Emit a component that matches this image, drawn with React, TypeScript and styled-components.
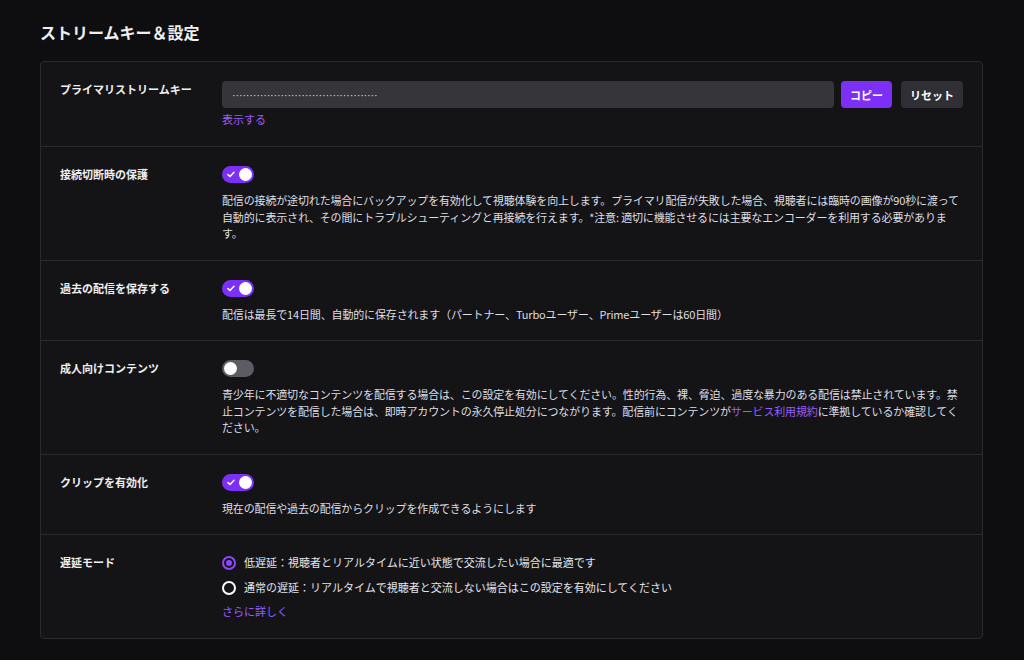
import React from "react";
import styled, { createGlobalStyle } from "styled-components";

const Global = createGlobalStyle`
  html, body { margin: 0; padding: 0; background: #0e0e10; }
  body {
    font-family: "Noto Sans CJK JP", "Noto Sans", "Liberation Sans", sans-serif;
    color: #efeff1;
  }
  * { box-sizing: border-box; }
`;

const Page = styled.div`
  width: 1024px;
  height: 660px;
  padding: 20px 41px 0 40px;
  background: #0e0e10;
  overflow: hidden;
`;

const Title = styled.h1`
  margin: 0 0 17px;
  font-size: 16px;
  line-height: 24px;
  font-weight: 700;
  color: #efeff1;
`;

const Panel = styled.section`
  background: #141417;
  border: 1px solid #2a2a2e;
  border-radius: 4px;
`;

const Row = styled.div<{ $last?: boolean }>`
  display: grid;
  grid-template-columns: 162px 1fr;
  padding: 19px 19px 18px 19px;
  border-bottom: ${(p) => (p.$last ? "none" : "1px solid #2a2a2e")};
`;

const Label = styled.div`
  font-size: 11px;
  line-height: 17px;
  font-weight: 700;
  color: #efeff1;
`;

const Control = styled.div`
  display: flex;
  flex-direction: column;
  align-items: flex-start;
  min-width: 0;
`;

const KeyLine = styled.div`
  display: flex;
  align-items: center;
  width: 100%;
`;

const KeyInput = styled.div`
  flex: 1;
  height: 27px;
  background: #35353a;
  border-radius: 4px;
  display: flex;
  align-items: center;
  padding-left: 10px;
  font-family: "Liberation Sans", sans-serif;
  font-size: 11px;
  color: #d9d9de;
  letter-spacing: -0.2px;
  overflow: hidden;
  white-space: nowrap;
`;

const Button = styled.button<{ $primary?: boolean }>`
  height: 27px;
  border: none;
  border-radius: 4px;
  padding: 0 9px;
  margin-left: ${(p) => (p.$primary ? "7px" : "9px")};
  background: ${(p) => (p.$primary ? "#7b2ff7" : "#2f2f35")};
  color: #ffffff;
  font-family: "Noto Sans CJK JP", sans-serif;
  font-size: 11px;
  font-weight: 700;
  cursor: pointer;
`;

const Link = styled.a`
  color: #9a5cff;
  text-decoration: none;
  cursor: pointer;
`;

const SmallLink = styled(Link)`
  display: block;
  margin-top: 3px;
  font-size: 11px;
  line-height: 17px;
`;

const Toggle = styled.div<{ $on?: boolean }>`
  position: relative;
  width: 32px;
  height: 17px;
  border-radius: 9px;
  background: ${(p) => (p.$on ? "#7b2ff7" : "#5c5c62")};
  flex-shrink: 0;
`;

const Knob = styled.div<{ $on?: boolean }>`
  position: absolute;
  top: 2px;
  left: ${(p) => (p.$on ? "17px" : "2px")};
  width: 13px;
  height: 13px;
  border-radius: 50%;
  background: #ffffff;
`;

const Check = styled.svg`
  position: absolute;
  left: 5px;
  top: 5px;
`;

const Desc = styled.p`
  margin: 9px 0 0;
  font-size: 11px;
  line-height: 16.5px;
  letter-spacing: -0.15px;
  color: #dedee3;
`;

const RadioList = styled.div`
  display: flex;
  flex-direction: column;
  gap: 8px;
`;

const RadioItem = styled.label`
  display: flex;
  align-items: center;
  gap: 8px;
  font-size: 11px;
  line-height: 17px;
  color: #e4e4e8;
`;

const RadioCircle = styled.span<{ $on?: boolean }>`
  width: 14px;
  height: 14px;
  border-radius: 50%;
  border: 2px solid ${(p) => (p.$on ? "#8c47ff" : "#ffffff")};
  display: flex;
  align-items: center;
  justify-content: center;
  flex-shrink: 0;
  &::after {
    content: "";
    width: 6px;
    height: 6px;
    border-radius: 50%;
    background: ${(p) => (p.$on ? "#8c47ff" : "transparent")};
  }
`;

const MoreLink = styled(Link)`
  margin-top: 7px;
  font-size: 11px;
  line-height: 17px;
`;

function Switch({ on }: { on?: boolean }) {
  return (
    <Toggle $on={on}>
      {on && (
        <Check width="8" height="7" viewBox="0 0 8 7">
          <path d="M1 3.6 L3 5.5 L7 1.2" fill="none" stroke="#fff" strokeWidth="1.5" strokeLinecap="round" strokeLinejoin="round" />
        </Check>
      )}
      <Knob $on={on} />
    </Toggle>
  );
}

export default function App() {
  return (
    <>
      <Global />
      <Page>
        <Title>ストリームキー＆設定</Title>
        <Panel>
          <Row>
            <Label>プライマリストリームキー</Label>
            <Control>
              <KeyLine>
                <KeyInput>{"·".repeat(42)}</KeyInput>
                <Button $primary>コピー</Button>
                <Button>リセット</Button>
              </KeyLine>
              <SmallLink>表示する</SmallLink>
            </Control>
          </Row>
          <Row>
            <Label>接続切断時の保護</Label>
            <Control>
              <Switch on />
              <Desc>
                配信の接続が途切れた場合にバックアップを有効化して視聴体験を向上します。プライマリ配信が失敗した場合、視聴者には臨時の画像が90秒に渡って自動的に表示され、その間にトラブルシューティングと再接続を行えます。*注意: 適切に機能させるには主要なエンコーダーを利用する必要があります。
              </Desc>
            </Control>
          </Row>
          <Row>
            <Label>過去の配信を保存する</Label>
            <Control>
              <Switch on />
              <Desc>配信は最長で14日間、自動的に保存されます（パートナー、Turboユーザー、Primeユーザーは60日間）</Desc>
            </Control>
          </Row>
          <Row>
            <Label>成人向けコンテンツ</Label>
            <Control>
              <Switch />
              <Desc>
                青少年に不適切なコンテンツを配信する場合は、この設定を有効にしてください。性的行為、裸、脅迫、過度な暴力のある配信は禁止されています。禁止コンテンツを配信した場合は、即時アカウントの永久停止処分につながります。配信前にコンテンツが<Link>サービス利用規約</Link>に準拠しているか確認してください。
              </Desc>
            </Control>
          </Row>
          <Row>
            <Label>クリップを有効化</Label>
            <Control>
              <Switch on />
              <Desc>現在の配信や過去の配信からクリップを作成できるようにします</Desc>
            </Control>
          </Row>
          <Row $last>
            <Label>遅延モード</Label>
            <Control>
              <RadioList>
                <RadioItem>
                  <RadioCircle $on />
                  低遅延：視聴者とリアルタイムに近い状態で交流したい場合に最適です
                </RadioItem>
                <RadioItem>
                  <RadioCircle />
                  通常の遅延：リアルタイムで視聴者と交流しない場合はこの設定を有効にしてください
                </RadioItem>
              </RadioList>
              <MoreLink>さらに詳しく</MoreLink>
            </Control>
          </Row>
        </Panel>
      </Page>
    </>
  );
}
